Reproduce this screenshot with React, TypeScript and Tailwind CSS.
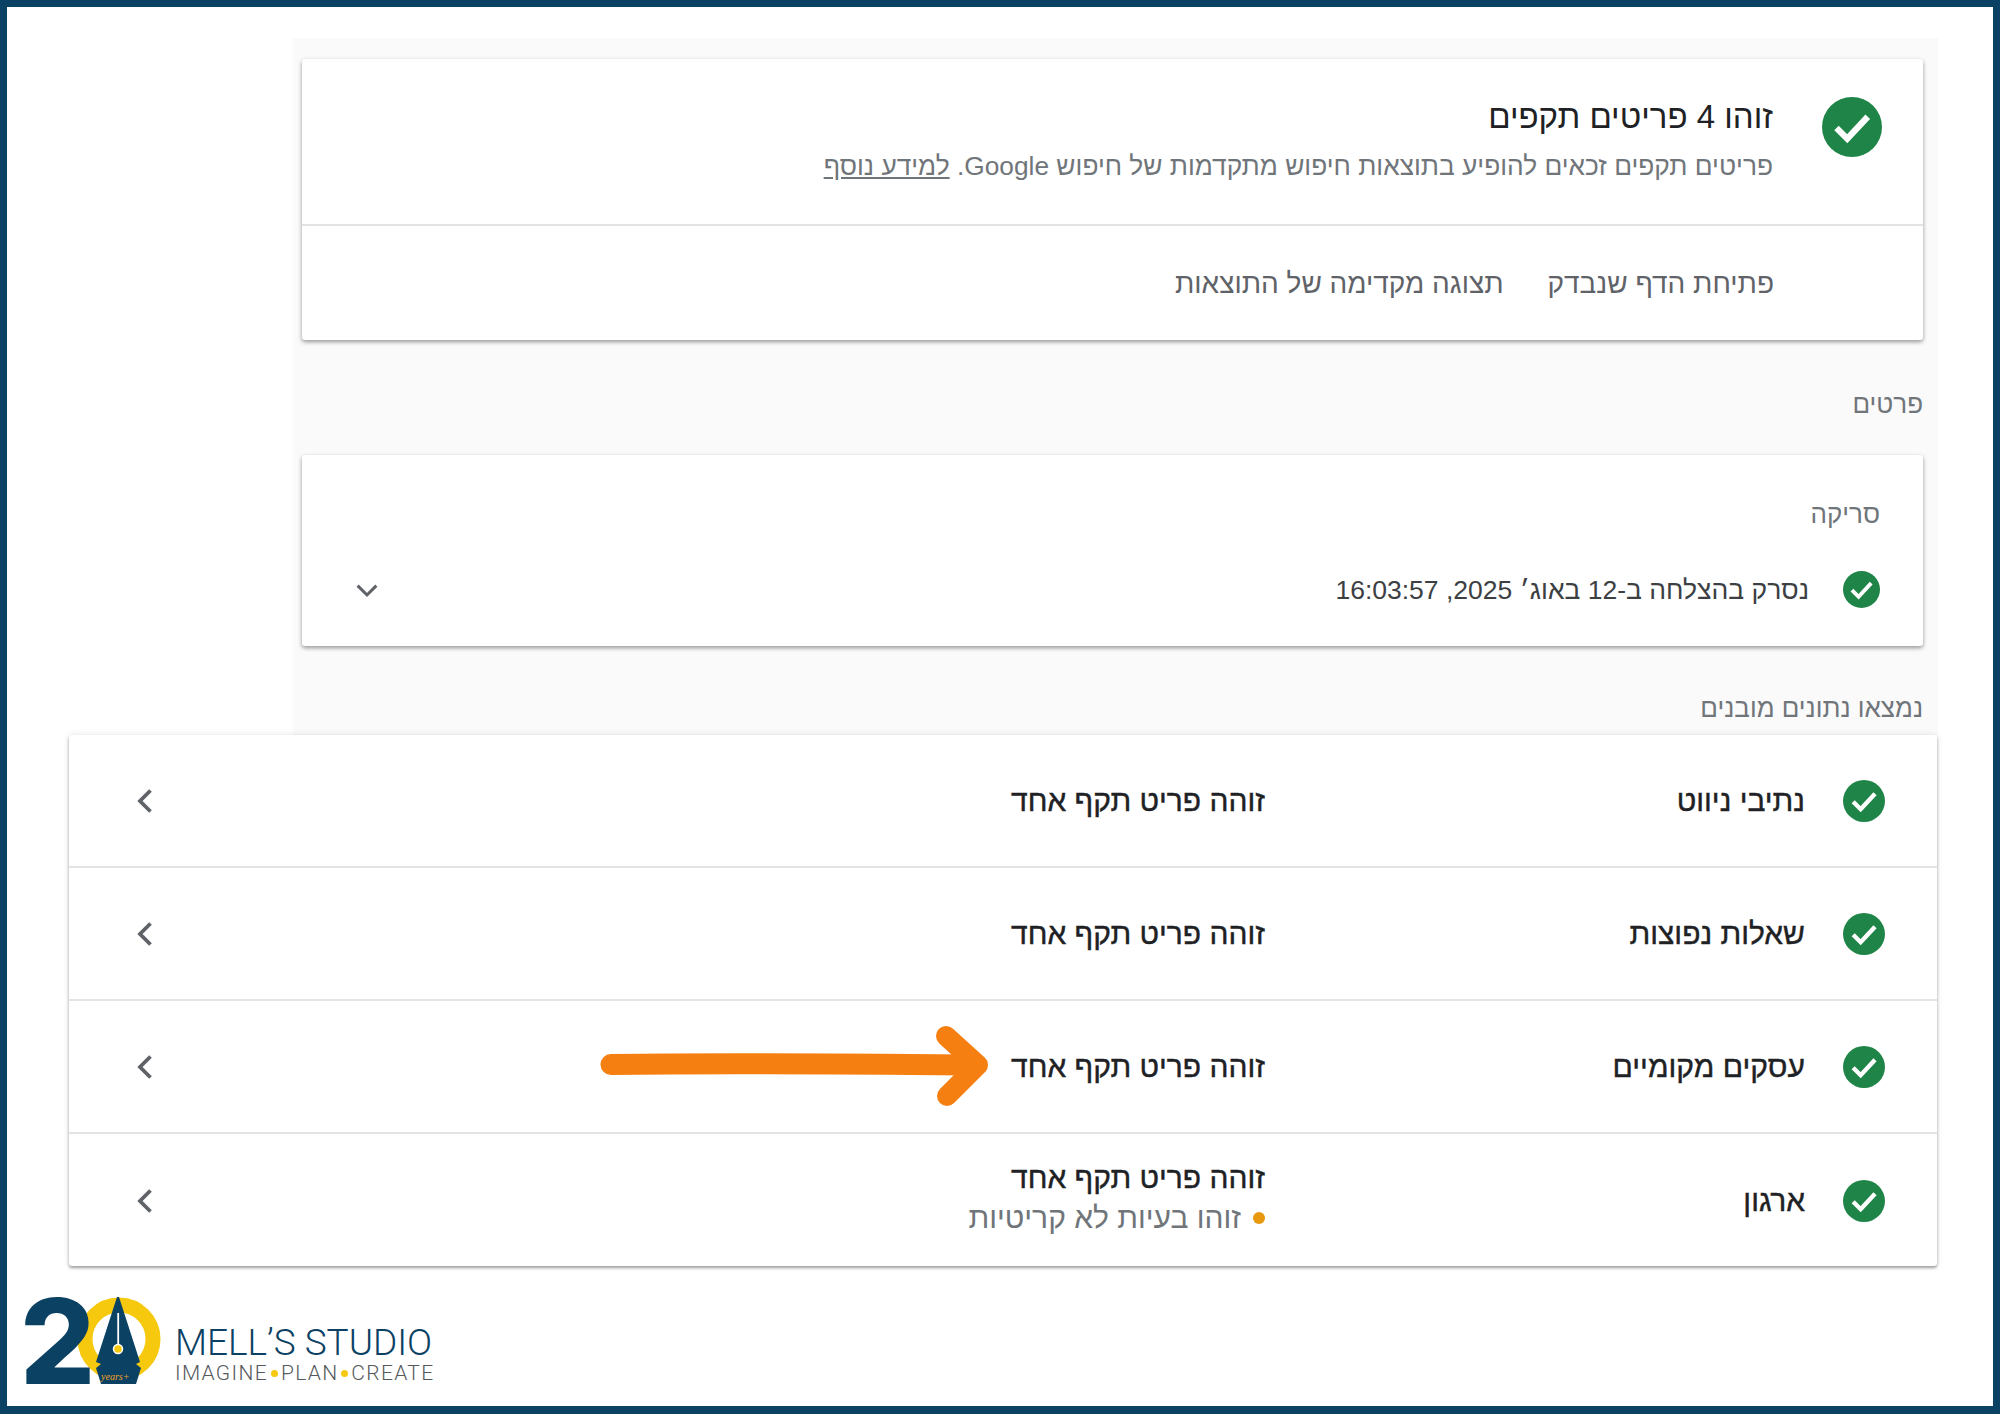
const font = "font-['Liberation_Sans',Arial,sans-serif]";

function CheckCircle({ className }: { className: string }) {
  return (
    <svg viewBox="0 0 24 24" className={className}>
      <circle cx="12" cy="12" r="12" fill="#1f8447" />
      <path d="M5.8 12.4l4.3 4.3 8.2-8.8" fill="none" stroke="#fff" strokeWidth="2.5" />
    </svg>
  );
}

function ChevronLeft() {
  return (
    <svg viewBox="0 0 16 26" className="w-[16px] h-[26px]">
      <path d="M13.5 2.5L3 13l10.5 10.5" fill="none" stroke="#5f6368" strokeWidth="3.8" />
    </svg>
  );
}

function Arrow() {
  return (
    <svg viewBox="0 0 390 84" className="absolute left-[531px] top-[23px] w-[390px] h-[84px]">
      <path d="M11 40.5C120 39 260 40 368 41" fill="none" stroke="#f57f11" strokeWidth="21" strokeLinecap="round" />
      <path d="M346 12L378 41L347 72" fill="none" stroke="#f57f11" strokeWidth="20" strokeLinecap="round" strokeLinejoin="round" />
    </svg>
  );
}

const rows = [
  { name: "נתיבי ניווט" },
  { name: "שאלות נפוצות" },
  { name: "עסקים מקומיים", arrow: true },
  { name: "ארגון", warning: "זוהו בעיות לא קריטיות" },
];

function Logo() {
  return (
    <div className="flex items-center mt-[31px] ml-[13px]">
      <svg viewBox="-3 0 143 90" className="w-[143px] h-[90px] shrink-0 overflow-visible">
        <circle cx="96" cy="42" r="34" fill="none" stroke="#f6c90e" strokeWidth="15" />
        <text x="-3" y="87" fontFamily="Inter, sans-serif" fontWeight="800" fontSize="118" fill="#0b4163">2</text>
        <path d="M94 0L96 0L117 65L113 67L118 71L113 87L78 87L73 71L78 67L73 65Z" fill="#0b4163" />
        <rect x="94.3" y="16" width="1.8" height="36" fill="#fff" />
        <circle cx="95" cy="52" r="4.5" fill="#f6c90e" stroke="#fff" strokeWidth="1.5" />
        <text x="78" y="83" fontFamily="Liberation Serif, serif" fontStyle="italic" fontSize="10" fill="#f5a31a">years+</text>
      </svg>
      <div className="ml-[12px] font-['Roboto',sans-serif] font-light mt-[24px]">
        <div className="text-[37px] leading-[38px] text-[#0b4163] whitespace-nowrap">MELL’S STUDIO</div>
        <div className="flex items-center text-[21px] leading-[22px] text-[#55595c] tracking-[1.3px] whitespace-nowrap">
          IMAGINE
          <span className="mx-[3px] w-[7px] h-[7px] rounded-full bg-[#f6c90e]" />
          PLAN
          <span className="mx-[3px] w-[7px] h-[7px] rounded-full bg-[#f6c90e]" />
          CREATE
        </div>
      </div>
    </div>
  );
}

export default function App() {
  return (
    <div className={`${font} h-[1414px] w-[2000px] border-[7px] border-b-[8px] border-[#0b4163] bg-white overflow-hidden`}>
      {/* gray report panel */}
      <div dir="rtl" className="mt-[31px] ml-[286px] w-[1645px] h-[697px] bg-[#fafafa] pt-[21px] pr-[15px] pl-[9px]">
        <div className="bg-white rounded-[3px] shadow-[0_2px_4px_rgba(0,0,0,0.4)]">
          <div className="h-[167px] flex items-start pr-[41px] pt-[38px] border-b-2 border-[#e3e3e3]">
            <CheckCircle className="w-[60px] h-[60px] shrink-0" />
            <div className="mr-[49px]">
              <div className="text-[33px] leading-[40px] text-[#202124]">זוהו 4 פריטים תקפים</div>
              <div className="text-[26.3px] leading-[32px] text-[#70757a] mt-[13px]">
                פריטים תקפים זכאים להופיע בתוצאות חיפוש מתקדמות של חיפוש Google. <span className="underline">למידע נוסף</span>
              </div>
            </div>
          </div>
          <div className="h-[114px] flex items-center gap-[44px] pr-[149px] pt-[2px] text-[28px] text-[#5f6368]">
            <span>פתיחת הדף שנבדק</span>
            <span>תצוגה מקדימה של התוצאות</span>
          </div>
        </div>

        <div className="h-[115px] pt-[50px] text-[26px] leading-[28px] text-[#70757a]">פרטים</div>

        <div className="bg-white h-[191px] rounded-[3px] shadow-[0_2px_4px_rgba(0,0,0,0.4)] pr-[43px] pt-[44px]">
          <div className="text-[26px] leading-[30px] text-[#70757a]">סריקה</div>
          <div className="flex items-center mt-[41px]">
            <CheckCircle className="w-[37px] h-[37px] shrink-0" />
            <span className="mr-[34px] text-[26.5px] leading-[37px] pt-[2px] text-[#3c4043]">נסרק בהצלחה ב-12 באוג׳ 2025, 16:03:57</span>
            <svg viewBox="0 0 24 24" className="w-[30px] h-[30px] mr-auto ml-[50px]">
              <path d="M4.5 8.5L12 16l7.5-7.5" fill="none" stroke="#5f6368" strokeWidth="2.4" />
            </svg>
          </div>
        </div>

        <div className="pt-[47px] text-[26px] leading-[30px] text-[#70757a]">נמצאו נתונים מובנים</div>
      </div>

      {/* structured data card, wider than the panel */}
      <div dir="rtl" className="ml-[62px] w-[1868px] h-[531px] bg-white rounded-[3px] shadow-[0_2px_3px_rgba(0,0,0,0.35),0_0_7px_rgba(0,0,0,0.1)]">
        {rows.map((row) => (
          <div key={row.name} className="relative h-[133px] flex items-center pr-[52px] pl-[68px] border-b-2 border-[#e4e4e4] last:border-b-0">
            <CheckCircle className="w-[42px] h-[42px] shrink-0" />
            <div className="w-[540px] mr-[38px] shrink-0 text-[30px] text-[#202124] [-webkit-text-stroke:0.4px]">{row.name}</div>
            <div className="flex-1">
              <div className="text-[30px] leading-[40px] text-[#202124] [-webkit-text-stroke:0.4px]">זוהה פריט תקף אחד</div>
              {row.warning && (
                <div className="flex items-center text-[30px] leading-[40px] text-[#70757a] mb-[6px]">
                  <span className="w-[12px] h-[12px] rounded-full bg-[#e8980c] ml-[12px]" />
                  {row.warning}
                </div>
              )}
            </div>
            <ChevronLeft />
            {row.arrow && <Arrow />}
          </div>
        ))}
      </div>

      <Logo />
    </div>
  );
}
